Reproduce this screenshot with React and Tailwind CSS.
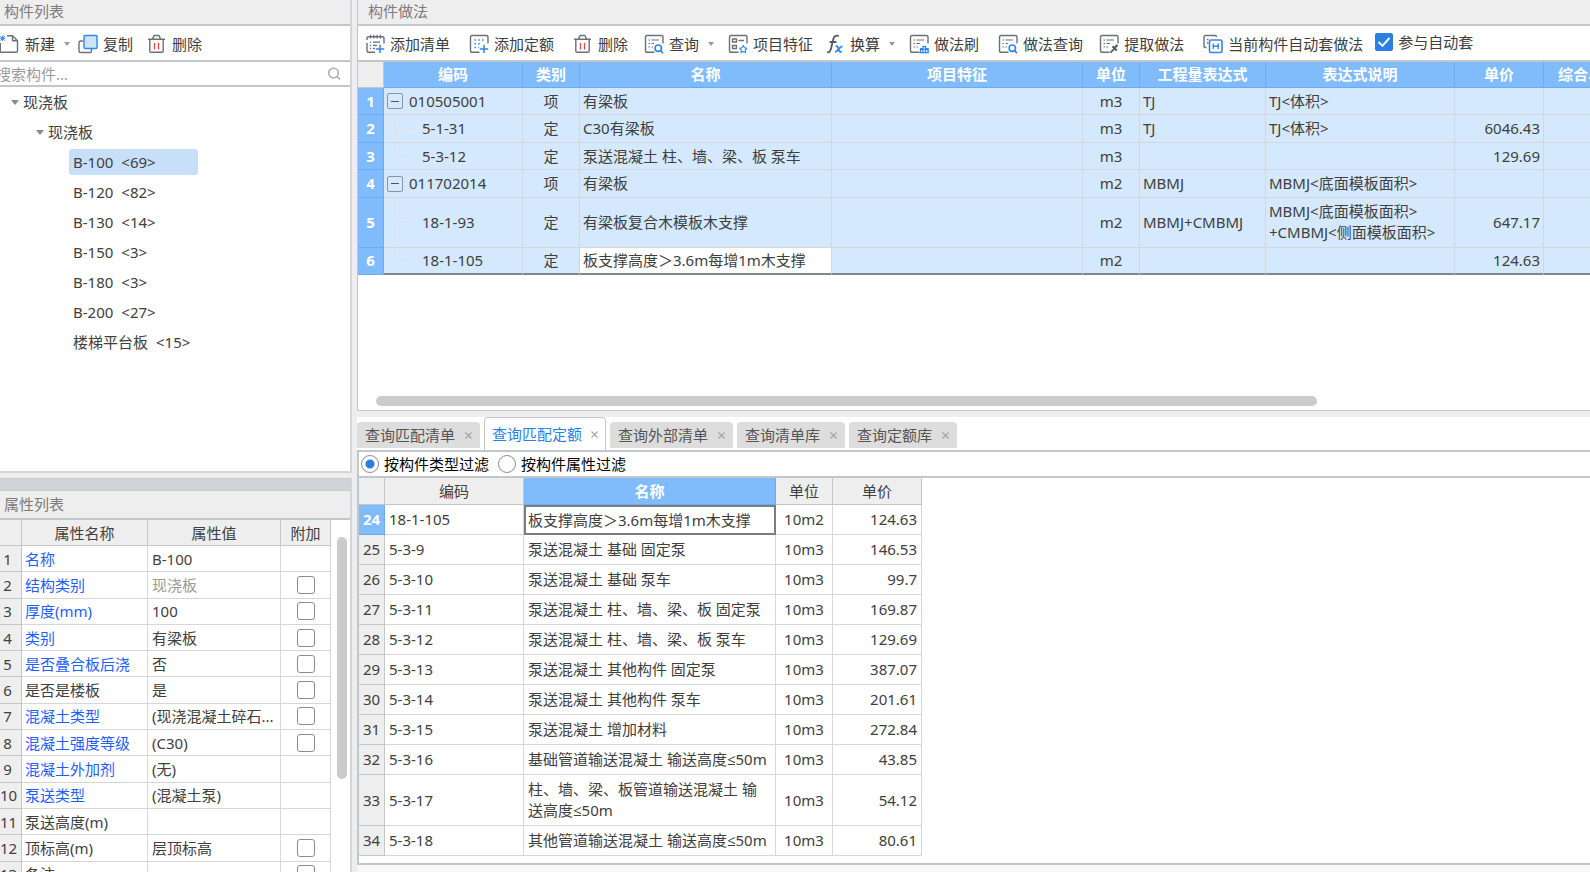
const ink = "#6b7078";
const blue = "#2f86ec";

function Svg({ children }) {
  return (
    <svg width="20" height="20" viewBox="0 0 20 20" fill="none" stroke={ink} strokeWidth="1.4" strokeLinejoin="round" className="shrink-0" aria-hidden="true">
      {children}
    </svg>
  );
}

const Sheet = () => <path d="M10.5 18.3H3Q1.5 18.3 1.5 16.8V3Q1.5 1.5 3 1.5H17.5Q19 1.5 19 3V9.5" />;

const icons = {
  create: (
    <Svg>
      <path d="M7 1.700H12.5L17.5 6.700V17Q17.5 18.300 16.2 18.300H1.5Q0.3 18.300 0.3 17V9" />
      <path d="M12.5 1.700V6.700H17.5" />
      <path d="M0.300 2L4.900 6.600M4.900 2L0.300 6.600M0 4.300H5.300M2.600 1.700V6.900" stroke={blue} strokeWidth="1" />
    </Svg>
  ),
  copy: (
    <Svg>
      <path d="M5 7H2.500Q1 7 1 8.500V17Q1 18.500 2.500 18.500H12Q13.500 18.500 13.500 17V15" />
      <rect x="6" y="1.500" width="13" height="13" rx="1" fill="#cfe3fc" stroke={blue} />
    </Svg>
  ),
  trash: (
    <Svg>
      <path d="M1 5.300H18M5.500 5.100L7 1.500H12L13.500 5.100M2.800 5.300V17Q2.800 18.300 4.100 18.300H14.900Q16.200 18.300 16.200 17V5.300" />
      <path d="M7.500 9V15.500M11.500 9V15.500" stroke="#e2474b" strokeWidth="1.300" />
    </Svg>
  ),
  addList: (
    <Svg>
      <path d="M10 18.300H3.500Q2 18.300 2 16.800V9M2 6V4Q2 2.800 3.500 2.800H17.500Q19 2.800 19 4V9.500" />
      <path d="M5.500 0.800V4.500M8.800 0.800V4.500M12.100 0.800V4.500M15.400 0.800V4.500" strokeWidth="1.200" />
      <path d="M5 8.200H6.200M8 8.200H15M5 11.300H6.200M8 11.300H12M5 14.300H6.200M8 14.300H10" strokeWidth="1.200" />
      <path d="M15 10.800V19M10.800 14.900H19.200" stroke={blue} strokeWidth="1.500" />
    </Svg>
  ),
  addQuota: (
    <Svg>
      <Sheet />
      <path d="M5.500 6H15M5.500 9.700H12M5.500 13.500H10" stroke={blue} strokeDasharray="1.500 2.300" />
      <path d="M15 10.800V19M10.800 14.900H19.200" stroke={blue} strokeWidth="1.500" />
    </Svg>
  ),
  query: (
    <Svg>
      <Sheet />
      <path d="M4.500 6H6M7.500 6H15M4.500 9.500H6M7.500 9.500H10M4.500 13H6M7.500 13H9" strokeWidth="1.200" />
      <circle cx="14.300" cy="14.200" r="3.200" stroke={blue} strokeWidth="1.600" />
      <path d="M16.600 16.600L19 19.200" stroke={blue} strokeWidth="1.600" />
    </Svg>
  ),
  feature: (
    <Svg>
      <Sheet />
      <path d="M4.500 5H8.500V8H4.500ZM4.500 11.500H8.500V14.500H4.500ZM10.500 6.500H16" />
      <path d="M15.300 11.500L16.500 13.700L19 14.200L17.300 16L17.600 18.500L15.300 17.500L13 18.500L13.300 16L11.600 14.200L14.100 13.700Z" stroke={blue} strokeWidth="1.100" />
    </Svg>
  ),
  fx: (
    <Svg>
      <path d="M2 18.200C4.500 18.800 5.500 17 6.300 13.500L8.200 5.500C9 2.200 11 1 13.800 2M4.500 8H11.500" stroke="#555a63" strokeWidth="1.800" />
      <path d="M10.500 12.500C12 11.700 13 12.500 13.500 15S15 18.500 17 17.500M17.500 12.500C15 12 12.500 18.300 10 17.800" stroke={blue} strokeWidth="1.800" />
    </Svg>
  ),
  brush: (
    <Svg>
      <Sheet />
      <path d="M4.500 6H6M7.500 6H15M4.500 9.500H6M7.500 9.500H11M4.500 13H6M7.500 13H9" strokeWidth="1.200" />
      <path d="M11.500 18.700V14.700H14V12.300H16.600V14.700H19.200V18.700ZM11.500 15.500H19.200M14 16.500V18.700M16.600 16.500V18.700" stroke={blue} strokeWidth="1.300" />
    </Svg>
  ),
  extract: (
    <Svg>
      <Sheet />
      <path d="M4.500 6H6M7.500 6H15M4.500 9.500H6M7.500 9.500H11M4.500 13H6M7.500 13H9" strokeWidth="1.200" />
      <path d="M11.500 18.700L15.500 14.500" stroke="#555a63" strokeWidth="1.800" />
      <path d="M13.500 12.300L17.700 16.500M15.500 14L18.500 11" stroke="#555a63" strokeWidth="2.200" />
    </Svg>
  ),
  auto: (
    <Svg>
      <path d="M3.500 13.500H2.500Q1 13.500 1 12V3Q1 1.500 2.500 1.500H12Q13.500 1.500 13.500 3M4 5.500H5.500M4 9H5.500" />
      <rect x="6.500" y="6" width="12.500" height="12.500" rx="1.500" stroke={blue} strokeWidth="1.600" />
      <path d="M10.300 9.500V15M15.200 9.500V15M10.300 12.200H15.200" stroke={blue} />
    </Svg>
  ),
};

function Caret() {
  return (
    <svg width="8" height="5" viewBox="0 0 8 5" className="shrink-0" aria-hidden="true">
      <path d="M0 0H8L4 5Z" fill="#8a8a8a" />
    </svg>
  );
}

function Tool({ icon, label, menu, className = "" }) {
  return (
    <button type="button" className={`flex shrink-0 items-center gap-[5px] whitespace-nowrap ${className}`}>
      {icons[icon]}
      <span>{label}</span>
      {menu && <svg width="6" height="4" viewBox="0 0 6 4" className="ml-1 shrink-0" aria-hidden="true"><path d="M0 0H6L3 4Z" fill="#999" /></svg>}
    </button>
  );
}

function PanelTitle({ children, className }) {
  return <h2 className={`flex shrink-0 items-center border-b-2 border-[#c3c7cb] bg-[#eeeeee] text-[#7c7c7c] ${className}`}>{children}</h2>;
}

const leaves = [["B-100", 69], ["B-120", 82], ["B-130", 14], ["B-150", 3], ["B-180", 3], ["B-200", 27], ["楼梯平台板", 15]];

function ComponentList() {
  return (
    <section className="flex min-h-0 flex-1 flex-col border-r-2 border-b-2 border-[#d3d5d8]">
      <PanelTitle className="h-[26px] pb-0.5 pl-1">构件列表</PanelTitle>
      <div className="flex h-9 shrink-0 items-center border-b-2 border-[#c3c7cb] bg-white pt-0.5">
        <Tool icon="create" label="新建" menu />
        <Tool icon="copy" label="复制" className="ml-2" />
        <Tool icon="trash" label="删除" className="ml-[14px]" />
      </div>
      <div className="flex h-[25px] shrink-0 items-center overflow-hidden border-b-2 border-[#c3c7cb] bg-white pr-2">
        <input aria-label="搜索构件" placeholder="搜索构件..." className="-ml-1 min-w-0 flex-1 bg-transparent outline-none placeholder:text-[#9b9b9b]" />
        <svg width="16" height="16" viewBox="0 0 16 16" fill="none" stroke="#adadad" strokeWidth="1.600" aria-hidden="true">
          <circle cx="7.500" cy="7" r="4.800" />
          <path d="M11 10.500L14 13.500" />
        </svg>
      </div>
      <ul className="min-h-0 flex-1 overflow-hidden bg-white leading-[30px]">
        <li>
          <div className="flex items-center gap-1 pl-[11px]"><Caret />现浇板</div>
          <ul>
            <li>
              <div className="flex items-center gap-1 pl-9"><Caret />现浇板</div>
              <ul className="pl-[69px]">
                {leaves.map(([name, count], i) => (
                  <li key={name} className="flex h-[30px] items-center">
                    <button type="button" className={`flex h-[26px] gap-2 rounded-[3px] px-1 leading-[26px] ${i === 0 ? "w-[129px] bg-[#c8dffa]" : ""}`}>
                      <span>{name}</span> <span>{`<${count}>`}</span>
                    </button>
                  </li>
                ))}
              </ul>
            </li>
          </ul>
        </li>
      </ul>
    </section>
  );
}

const props = [
  ["名称", "B-100", 1, 0],
  ["结构类别", "现浇板", 1, 1],
  ["厚度(mm)", "100", 1, 1],
  ["类别", "有梁板", 1, 1],
  ["是否叠合板后浇", "否", 1, 1],
  ["是否是楼板", "是", 0, 1],
  ["混凝土类型", "(现浇混凝土碎石...", 1, 1],
  ["混凝土强度等级", "(C30)", 1, 1],
  ["混凝土外加剂", "(无)", 1, 0],
  ["泵送类型", "(混凝土泵)", 1, 0],
  ["泵送高度(m)", "", 0, 0],
  ["顶标高(m)", "层顶标高", 0, 1],
  ["备注", "", 0, 1],
];

function PropertyList() {
  const head = "border-r border-b border-[#c6c6c6] bg-[#eeeeee] p-0 font-normal";
  const cell = "border-r border-b border-[#d6d6d6] p-0";
  return (
    <section className="flex h-[394px] shrink-0 flex-col border-r-2 border-[#d3d5d8]">
      <div className="h-[13px] shrink-0 border-y border-[#c8cacf] bg-[#d2d3d9]" />
      <PanelTitle className="h-[29px] pb-0.5 pl-1">属性列表</PanelTitle>
      <div className="flex min-h-0 flex-1 overflow-hidden bg-white">
        <table className="h-[368px] w-[331px] shrink-0 table-fixed border-separate border-spacing-0 leading-5">
          <colgroup>
            <col className="w-[22px]" /><col className="w-[126px]" /><col className="w-[133px]" /><col />
          </colgroup>
          <thead>
            <tr className="h-[26px]">
              <th className={head} aria-label="序号" />
              <th className={head}>属性名称</th>
              <th className={head}>属性值</th>
              <th className={head}>附加</th>
            </tr>
          </thead>
          <tbody>
            {props.map(([name, value, linked, box], i) => (
              <tr key={name} className="h-[26px]">
                <th className={`${head} ${i < 9 ? "pr-1.5" : "pr-1"}`}>{i + 1}</th>
                <td className={`${cell} whitespace-nowrap pl-[3px] ${linked ? "text-[#1f5eff]" : ""}`}>{name}</td>
                <td className={`${cell} whitespace-nowrap pl-1 ${i === 1 ? "text-[#9a9a9a]" : ""}`}>{value}</td>
                <td className={cell}>
                  {box ? <input type="checkbox" aria-label={`附加 ${name}`} className="mx-auto block size-[18px] appearance-none rounded-[3px] border border-[#8c8c8c] bg-white" /> : null}
                </td>
              </tr>
            ))}
          </tbody>
        </table>
        <div className="mt-[17px] ml-[6px] h-[242px] w-[10px] rounded-full bg-[#cbcbcb]" />
      </div>
    </section>
  );
}

const methods = [
  ["010505001", "项", "有梁板", "m3", "TJ", ["TJ<体积>"], ""],
  ["5-1-31", "定", "C30有梁板", "m3", "TJ", ["TJ<体积>"], "6046.43"],
  ["5-3-12", "定", "泵送混凝土 柱、墙、梁、板 泵车", "m3", "", [""], "129.69"],
  ["011702014", "项", "有梁板", "m2", "MBMJ", ["MBMJ<底面模板面积>"], ""],
  ["18-1-93", "定", "有梁板复合木模板木支撑", "m2", "MBMJ+CMBMJ", ["MBMJ<底面模板面积>", "+CMBMJ<侧面模板面积>"], "647.17"],
  ["18-1-105", "定", "板支撑高度＞3.6m每增1m木支撑", "m2", "", [""], "124.63"],
];

function CodeCell({ code, parent, last }) {
  if (parent) {
    return (
      <div className="flex items-center gap-[6px] pl-[3px]">
        <button type="button" aria-label="折叠" className="flex size-4 items-center justify-center rounded-[2px] border border-[#8e9399]">
          <span className="h-px w-2 bg-[#555]" />
        </button>
        {code}
      </div>
    );
  }
  return (
    <div className="flex h-full items-stretch">
      <div className="ml-[10px] flex w-5 flex-col">
        <div className="flex-1 border-b border-l border-[#dfe2e6]" />
        <div className={`flex-1 ${last ? "" : "border-l border-[#dfe2e6]"}`} />
      </div>
      <span className="flex items-center pl-2">{code}</span>
    </div>
  );
}

function MethodTable() {
  const head = "border-r border-b border-[#6faaf0] bg-[#80bbfb] p-0 font-bold text-white whitespace-nowrap";
  const cell = "border-r border-b border-[#d6d6da] p-0 whitespace-nowrap";
  return (
    <table className="h-[213px] w-[1275px] table-fixed border-separate border-spacing-0 leading-[21px]">
      <colgroup>
        <col className="w-[26px]" /><col className="w-[139px]" /><col className="w-[57px]" /><col className="w-[252px]" />
        <col className="w-[251px]" /><col className="w-[57px]" /><col className="w-[126px]" /><col className="w-[189px]" />
        <col className="w-[89px]" /><col className="w-[89px]" />
      </colgroup>
      <thead>
        <tr className="h-[26px]">
          <th className="border-r border-b border-[#c6c6c6] bg-[#eeeeee] p-0" aria-label="序号" />
          {["编码", "类别", "名称", "项目特征", "单位", "工程量表达式", "表达式说明", "单价", "综合单价"].map((h) => <th key={h} className={head}>{h}</th>)}
        </tr>
      </thead>
      <tbody className="bg-[#d5e9fe]">
        {methods.map(([code, kind, name, unit, expr, note, price], i) => {
          const end = i === 5 ? "border-b-2 border-b-[#808890]" : "";
          return (
            <tr key={code} className={i === 4 ? "h-[49px]" : "h-[27px]"}>
              <th className={head}>{i + 1}</th>
              <td className={`${cell} ${end} h-px`}><CodeCell code={code} parent={kind === "项"} last={i === 2 || i === 5} /></td>
              <td className={`${cell} ${end} text-center`}>{kind}</td>
              <td className={`${cell} ${end} pl-[3px] ${i === 5 ? "bg-white" : ""}`}>{name}</td>
              <td className={`${cell} ${end}`} />
              <td className={`${cell} ${end} text-center`}>{unit}</td>
              <td className={`${cell} ${end} pl-[3px]`}>{expr}</td>
              <td className={`${cell} ${end} pl-[3px]`}>{note.map((n) => <div key={n}>{n}</div>)}</td>
              <td className={`${cell} ${end} pr-[3px] text-right`}>{price}</td>
              <td className={`${cell} ${end}`} />
            </tr>
          );
        })}
      </tbody>
    </table>
  );
}

function MethodPanel() {
  return (
    <section className="flex h-[411px] shrink-0 flex-col border-b border-l border-[#c3c7cb] bg-white">
      <PanelTitle className="h-[26px] pb-0.5 pl-[10px]">构件做法</PanelTitle>
      <div className="flex h-9 shrink-0 items-center overflow-hidden border-b-2 border-[#c3c7cb] pt-0.5 pl-[7px]">
        <Tool icon="addList" label="添加清单" />
        <Tool icon="addQuota" label="添加定额" className="ml-[19px]" />
        <Tool icon="trash" label="删除" className="ml-[19px]" />
        <Tool icon="query" label="查询" menu className="ml-4" />
        <Tool icon="feature" label="项目特征" className="ml-[14px]" />
        <Tool icon="fx" label="换算" menu className="ml-3" />
        <Tool icon="brush" label="做法刷" className="ml-[14px]" />
        <Tool icon="query" label="做法查询" className="ml-[19px]" />
        <Tool icon="extract" label="提取做法" className="ml-4" />
        <Tool icon="auto" label="当前构件自动套做法" className="ml-[19px]" />
        <label className="ml-3 flex shrink-0 items-center gap-[5px] pb-1 whitespace-nowrap">
          <span className="relative flex size-[18px]">
            <input type="checkbox" defaultChecked className="size-[18px] appearance-none rounded-[2px] bg-[#2b7fe3]" />
            <svg viewBox="0 0 18 18" fill="none" stroke="#fff" strokeWidth="2" className="pointer-events-none absolute inset-0" aria-hidden="true"><path d="M3.500 9L7.500 12.800L14.500 4.800" /></svg>
          </span>
          参与自动套
        </label>
      </div>
      <div className="min-h-0 flex-1 overflow-hidden"><MethodTable /></div>
      <div className="mb-1 ml-[18px] h-[10px] w-[941px] shrink-0 rounded-full bg-[#cbcbcb]" />
    </section>
  );
}

const quotas = [
  ["18-1-105", "板支撑高度＞3.6m每增1m木支撑", "10m2", "124.63"],
  ["5-3-9", "泵送混凝土 基础 固定泵", "10m3", "146.53"],
  ["5-3-10", "泵送混凝土 基础 泵车", "10m3", "99.7"],
  ["5-3-11", "泵送混凝土 柱、墙、梁、板 固定泵", "10m3", "169.87"],
  ["5-3-12", "泵送混凝土 柱、墙、梁、板 泵车", "10m3", "129.69"],
  ["5-3-13", "泵送混凝土 其他构件 固定泵", "10m3", "387.07"],
  ["5-3-14", "泵送混凝土 其他构件 泵车", "10m3", "201.61"],
  ["5-3-15", "泵送混凝土 增加材料", "10m3", "272.84"],
  ["5-3-16", "基础管道输送混凝土 输送高度≤50m", "10m3", "43.85"],
  ["5-3-17", "柱、墙、梁、板管道输送混凝土 输送高度≤50m", "10m3", "54.12"],
  ["5-3-18", "其他管道输送混凝土 输送高度≤50m", "10m3", "80.61"],
];

function QuotaTable() {
  const head = "border-r border-b border-[#c6c6c6] bg-[#eeeeee] p-0 font-normal";
  const active = "border-r border-b border-[#6faaf0] bg-[#80bbfb] p-0 font-bold text-white";
  const cell = "border-r border-b border-[#d6d6d6] p-0";
  return (
    <table className="w-[563px] table-fixed border-separate border-spacing-0 leading-[21px]">
      <colgroup>
        <col className="w-[26px]" /><col className="w-[139px]" /><col className="w-[252px]" /><col className="w-[57px]" /><col className="w-[89px]" />
      </colgroup>
      <thead>
        <tr className="h-[27px]">
          <th className={head} aria-label="序号" />
          <th className={head}>编码</th>
          <th className={active}>名称</th>
          <th className={head}>单位</th>
          <th className={head}>单价</th>
        </tr>
      </thead>
      <tbody>
        {quotas.map(([code, name, unit, price], i) => (
          <tr key={code} className={i === 9 ? "h-[51px]" : "h-[30px]"}>
            <th className={i === 0 ? active : head}>{i + 24}</th>
            <td className={`${cell} pl-1`}>{code}</td>
            <td className={i === 0 ? "border-2 border-[#7c7c7c] p-0 pl-[2px]" : `${cell} pl-1 pr-[5px]`}>{name}</td>
            <td className={`${cell} text-center`}>{unit}</td>
            <td className={`${cell} pr-1 text-right`}>{price}</td>
          </tr>
        ))}
      </tbody>
    </table>
  );
}

const tabs = ["查询匹配清单", "查询匹配定额", "查询外部清单", "查询清单库", "查询定额库"];

function QueryPanel() {
  return (
    <section className="mt-[6px] flex min-h-0 flex-1 flex-col bg-white">
      <div className="flex h-[33px] shrink-0 items-end gap-1">
        {tabs.map((t, i) => (
          <div
            key={t}
            className={
              i === 1
                ? "flex h-[33px] items-center gap-[9px] rounded-t-[4px] border border-b-0 border-[#c3c7cb] bg-white px-[7px] text-[#2b7fe3]"
                : "mb-[2px] flex h-[26px] items-center gap-[10px] rounded-t-[4px] bg-[#dddddd] px-2 text-[#555]"
            }
          >
            <button type="button">{t}</button>
            <button type="button" aria-label={`关闭${t}`}>
              <svg width="7" height="8" viewBox="0 0 7 8" stroke="#a3a3a3" strokeWidth="1.100" aria-hidden="true"><path d="M0.500 1.500L6.500 7.500M6.500 1.500L0.500 7.500" /></svg>
            </button>
          </div>
        ))}
      </div>
      <div className="flex min-h-0 flex-1 flex-col border-y-2 border-l-2 border-[#c3c7cb]">
        <div className="flex h-[26px] shrink-0 items-center gap-[9px] border-b-2 border-[#c3c7cb] pl-[2px] text-black">
          {["按构件类型过滤", "按构件属性过滤"].map((t, i) => (
            <label key={t} className="flex items-center gap-[5px]">
              <input type="radio" name="filter" defaultChecked={i === 0} className="size-[18px] appearance-none rounded-full border border-[#8c8c8c] bg-white checked:bg-[radial-gradient(circle,#2b7fe3_4px,#fff_5px)]" />
              {t}
            </label>
          ))}
        </div>
        <div className="min-h-0 flex-1 overflow-hidden"><QuotaTable /></div>
      </div>
      <div className="h-[7px] shrink-0 bg-[#f7f7f7]" />
    </section>
  );
}

export default function App() {
  return (
    <div className="flex h-screen overflow-hidden bg-[#eeeeee] font-['Noto_Sans','Open_Sans','Noto_Sans_CJK_SC',sans-serif] text-[15px] leading-5 text-[#404040]">
      <aside className="flex w-[352px] shrink-0 flex-col gap-[5px]">
        <ComponentList />
        <PropertyList />
      </aside>
      <main className="ml-[5px] flex min-w-0 flex-1 flex-col">
        <MethodPanel />
        <QueryPanel />
      </main>
    </div>
  );
}
